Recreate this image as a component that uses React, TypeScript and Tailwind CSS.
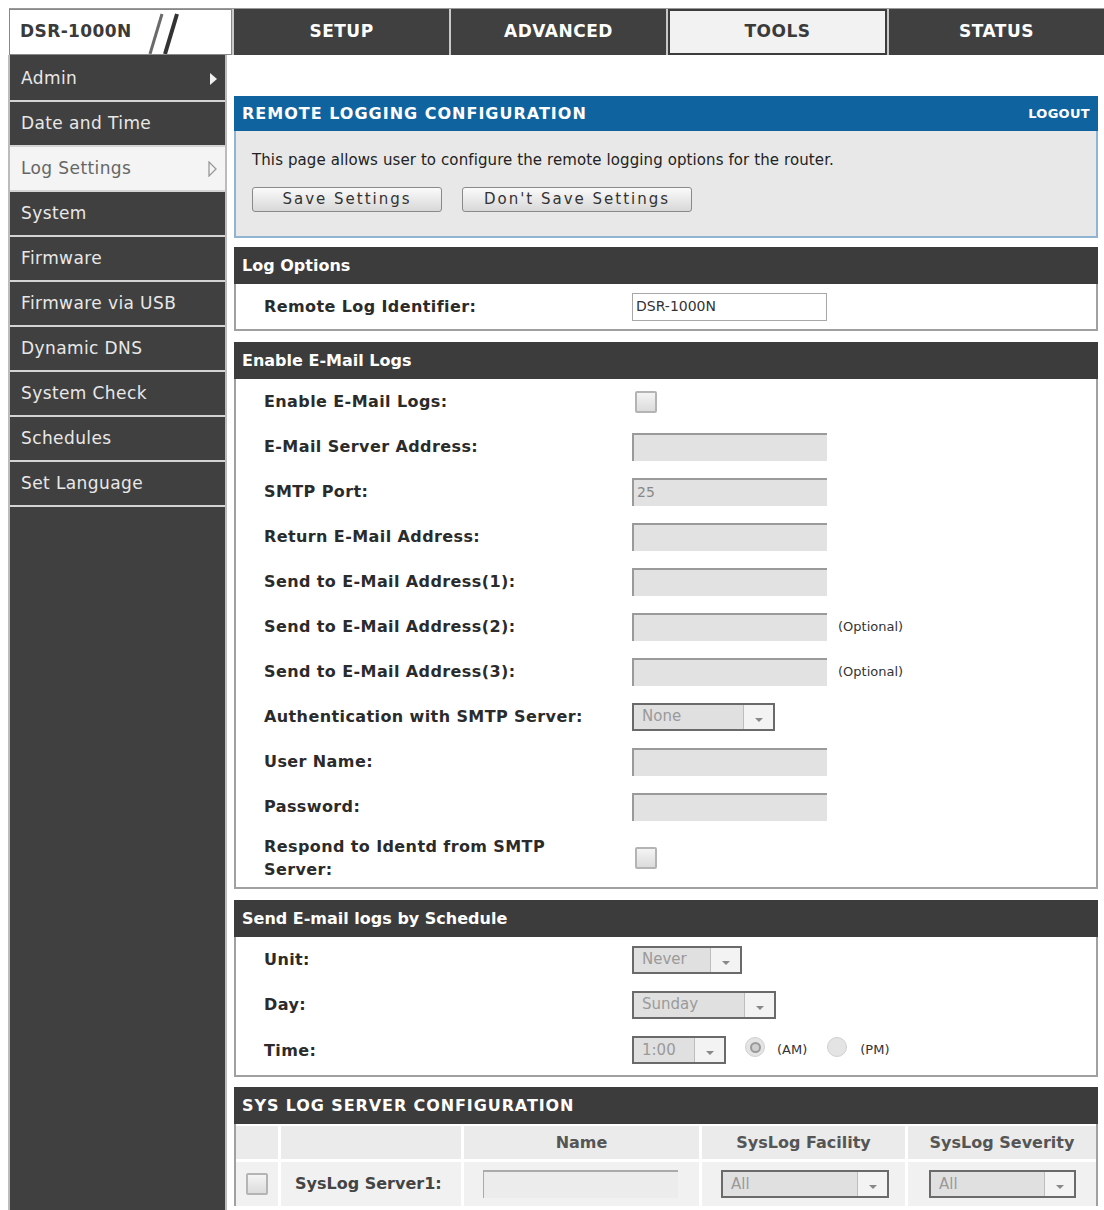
import React from 'react';

const tahoma = { fontFamily: '"DejaVu Sans", Verdana, sans-serif' };

const tabs = ['SETUP', 'ADVANCED', 'TOOLS', 'STATUS'];

const menu = [
  'Admin',
  'Date and Time',
  'Log Settings',
  'System',
  'Firmware',
  'Firmware via USB',
  'Dynamic DNS',
  'System Check',
  'Schedules',
  'Set Language',
];

function SectionHeader({ title, wide }: { title: string; wide?: boolean }) {
  return (
    <div
      className={`h-[37px] bg-[#3c3c3c] flex items-center pl-[8px] text-white font-bold text-[16px] ${
        wide ? 'tracking-[0.9px]' : ''
      }`}
    >
      {title}
    </div>
  );
}

function TextInput({ value = '', disabled = true }: { value?: string; disabled?: boolean }) {
  return (
    <div
      className={`w-[195px] h-[28px] flex items-center pl-[3px] text-[14px] ${
        disabled
          ? 'bg-[#e2e2e2] border-t-2 border-l-2 border-[#9a9a9a] text-[#888]'
          : 'bg-white border border-[#a8a8a8] text-[#333]'
      }`}
    >
      {value}
    </div>
  );
}

function Checkbox() {
  return (
    <div className="w-[22px] h-[22px] border-2 border-[#b4b4b4] bg-gradient-to-b from-[#f4f4f4] to-[#dcdcdc] rounded-[2px]" />
  );
}

function Select({ value, width }: { value: string; width: number }) {
  return (
    <div
      className="h-[28px] flex border-2 border-[#6a6a6a] bg-[#e0e0e0] text-[#9a9a9a] text-[15px]"
      style={{ width }}
    >
      <div className="flex-1 flex items-center pl-[8px]">{value}</div>
      <div className="w-[30px] border-l border-[#bdbdbd] bg-[#f3f3f3] flex items-center justify-center pt-[6px]">
        <svg width="10" height="6" viewBox="0 0 10 6">
          <path d="M1 1 L5 5 L9 1 Z" fill="#888" />
        </svg>
      </div>
    </div>
  );
}

function Row({ label, children, h = 45 }: { label: React.ReactNode; children: React.ReactNode; h?: number }) {
  return (
    <div className="flex items-center" style={{ height: h }}>
      <div className="w-[396px] shrink-0 pl-[28px] font-bold text-[16px] text-[#2b2b2b] tracking-[0.4px] leading-[23px]">
        {label}
      </div>
      <div className="flex items-center">{children}</div>
    </div>
  );
}

function Optional() {
  return <span className="ml-[11px] text-[13px] text-[#333]">(Optional)</span>;
}

function Radio({ checked }: { checked?: boolean }) {
  return (
    <div className="w-[20px] h-[20px] rounded-full bg-[#e4e4e4] border border-[#d0d0d0] flex items-center justify-center">
      {checked && <div className="w-[11px] h-[11px] rounded-full border-2 border-[#9a9a9a] bg-[#cfcfcf]" />}
    </div>
  );
}

export default function App() {
  return (
    <div className="w-[1104px] h-[1210px] bg-white overflow-hidden" style={tahoma}>
      {/* top bar */}
      <div className="pt-[8px] pl-[9px]">
        <div className="flex h-[47px] bg-[#c8c8c8] gap-[2px] border-t border-[#999]">
          <div className="w-[223px] bg-white border border-[#888] flex items-center pl-[10px] relative overflow-hidden">
            <span className="font-bold text-[17px] text-[#3a3a3a] tracking-[0.4px]">DSR-1000N</span>
            <svg className="absolute left-[136px] top-0" width="48" height="46" viewBox="0 0 48 46">
              <path d="M4 44 L16 4" stroke="#6a6a6a" strokeWidth="3" />
              <path d="M19 44 L31 4" stroke="#333" strokeWidth="4" />
            </svg>
          </div>
          {tabs.map((t) => (
            <div
              key={t}
              className={`flex-1 flex items-center justify-center font-bold text-[17px] tracking-[0.5px] ${
                t === 'TOOLS'
                  ? 'bg-[#f2f2f2] text-[#3a3a3a] border-2 border-[#3c3c3c]'
                  : 'bg-[#404040] text-white'
              }`}
            >
              {t}
            </div>
          ))}
        </div>
      </div>

      <div className="flex">
        {/* sidebar */}
        <div className="ml-[8px] w-[219px] h-[1160px] border-l-2 border-r-2 border-[#bcbcbc] bg-[#404040] pt-[2px]">
          {menu.map((m) => {
            const active = m === 'Log Settings';
            return (
              <div
                key={m}
                className={`h-[45px] border-b-2 border-[#d4d4d4] flex items-center justify-between pl-[11px] pr-[8px] text-[17px] ${
                  active ? 'bg-[#f4f4f4] text-[#666]' : 'text-[#e8e8e8]'
                }`}
              >
                <span className="tracking-[0.4px]">{m}</span>
                {m === 'Admin' && (
                  <svg width="7" height="12" viewBox="0 0 7 12">
                    <path d="M0 0 L7 6 L0 12 Z" fill="#f0f0f0" />
                  </svg>
                )}
                {active && (
                  <svg width="9" height="16" viewBox="0 0 9 16">
                    <path d="M1 1 L8 8 L1 15 Z" fill="none" stroke="#999" strokeWidth="1.3" />
                  </svg>
                )}
              </div>
            );
          })}
        </div>

        {/* main */}
        <div className="ml-[7px] w-[864px] pt-[41px] flex flex-col">
          <div className="h-[35px] bg-[#0f64a0] flex items-center justify-between pl-[8px] pr-[8px] text-white font-bold">
            <span className="text-[16px] tracking-[1px]">REMOTE LOGGING CONFIGURATION</span>
            <span className="text-[13px] tracking-[0.3px]">LOGOUT</span>
          </div>
          <div className="h-[107px] bg-[#e8e8e8] border-2 border-t-0 border-[#8fb5d3] pl-[16px] pt-[18px]">
            <div className="text-[15px] text-[#222] tracking-[0.1px]">
              This page allows user to configure the remote logging options for the router.
            </div>
            <div className="flex gap-[20px] mt-[15px]">
              <div className="w-[190px] h-[25px] rounded-[3px] border border-[#8a8a8a] bg-gradient-to-b from-[#fafafa] to-[#d8d8d8] flex items-center justify-center text-[15px] text-[#333] tracking-[2px]">
                Save Settings
              </div>
              <div className="w-[230px] h-[25px] rounded-[3px] border border-[#8a8a8a] bg-gradient-to-b from-[#fafafa] to-[#d8d8d8] flex items-center justify-center text-[15px] text-[#333] tracking-[2px]">
                Don't Save Settings
              </div>
            </div>
          </div>

          <div className="mt-[9px]">
            <SectionHeader title="Log Options" />
            <div className="border-2 border-t-0 border-[#a0a0a0]">
              <Row label="Remote Log Identifier:">
                <TextInput value="DSR-1000N" disabled={false} />
              </Row>
            </div>
          </div>

          <div className="mt-[11px]">
            <SectionHeader title="Enable E-Mail Logs" />
            <div className="border-2 border-t-0 border-[#a0a0a0]">
              <Row label="Enable E-Mail Logs:">
                <div className="ml-[3px]"><Checkbox /></div>
              </Row>
              <Row label="E-Mail Server Address:"><TextInput /></Row>
              <Row label="SMTP Port:"><TextInput value="25" /></Row>
              <Row label="Return E-Mail Address:"><TextInput /></Row>
              <Row label="Send to E-Mail Address(1):"><TextInput /></Row>
              <Row label="Send to E-Mail Address(2):"><TextInput /><Optional /></Row>
              <Row label="Send to E-Mail Address(3):"><TextInput /><Optional /></Row>
              <Row label="Authentication with SMTP Server:"><Select value="None" width={143} /></Row>
              <Row label="User Name:"><TextInput /></Row>
              <Row label="Password:"><TextInput /></Row>
              <Row label={<>Respond to Identd from SMTP<br />Server:</>} h={58}>
                <div className="ml-[3px]"><Checkbox /></div>
              </Row>
            </div>
          </div>

          <div className="mt-[11px]">
            <SectionHeader title="Send E-mail logs by Schedule" />
            <div className="border-2 border-t-0 border-[#a0a0a0] pb-[2px]">
              <Row label="Unit:"><Select value="Never" width={110} /></Row>
              <Row label="Day:"><Select value="Sunday" width={144} /></Row>
              <Row label="Time:" h={46}>
                <Select value="1:00" width={94} />
                <div className="ml-[19px] -mt-[6px]"><Radio checked /></div>
                <span className="ml-[12px] text-[13px] text-[#333]">(AM)</span>
                <div className="ml-[20px] -mt-[6px]"><Radio /></div>
                <span className="ml-[13px] text-[13px] text-[#333]">(PM)</span>
              </Row>
            </div>
          </div>

          <div className="mt-[10px]">
            <SectionHeader title="SYS LOG SERVER CONFIGURATION" wide />
            <div className="border-l-2 border-r-2 border-[#a0a0a0] bg-white">
              <div className="flex h-[35px] gap-[3px] pt-[2px] text-[16px] font-bold text-[#555]">
                <div className="w-[42px] bg-[#ebebeb]" />
                <div className="w-[180px] bg-[#ebebeb]" />
                <div className="w-[235px] bg-[#ebebeb] flex items-center justify-center">Name</div>
                <div className="w-[203px] bg-[#ebebeb] flex items-center justify-center">SysLog Facility</div>
                <div className="flex-1 bg-[#ebebeb] flex items-center justify-center">SysLog Severity</div>
              </div>
              <div className="flex h-[47px] gap-[3px] pt-[3px]">
                <div className="w-[42px] bg-[#f1f1f1] flex items-center justify-center">
                  <Checkbox />
                </div>
                <div className="w-[180px] bg-[#f1f1f1] flex items-center pl-[14px] font-bold text-[16px] text-[#444]">
                  SysLog Server1:
                </div>
                <div className="w-[235px] bg-[#f1f1f1] flex items-center pl-[19px]">
                  <div className="w-[195px] h-[28px] bg-[#ececec] border-t-2 border-l border-[#aaa]" />
                </div>
                <div className="w-[203px] bg-[#f1f1f1] flex items-center pl-[19px]">
                  <Select value="All" width={168} />
                </div>
                <div className="flex-1 bg-[#f1f1f1] flex items-center pl-[21px]">
                  <Select value="All" width={147} />
                </div>
              </div>
            </div>
          </div>
        </div>
      </div>
    </div>
  );
}
